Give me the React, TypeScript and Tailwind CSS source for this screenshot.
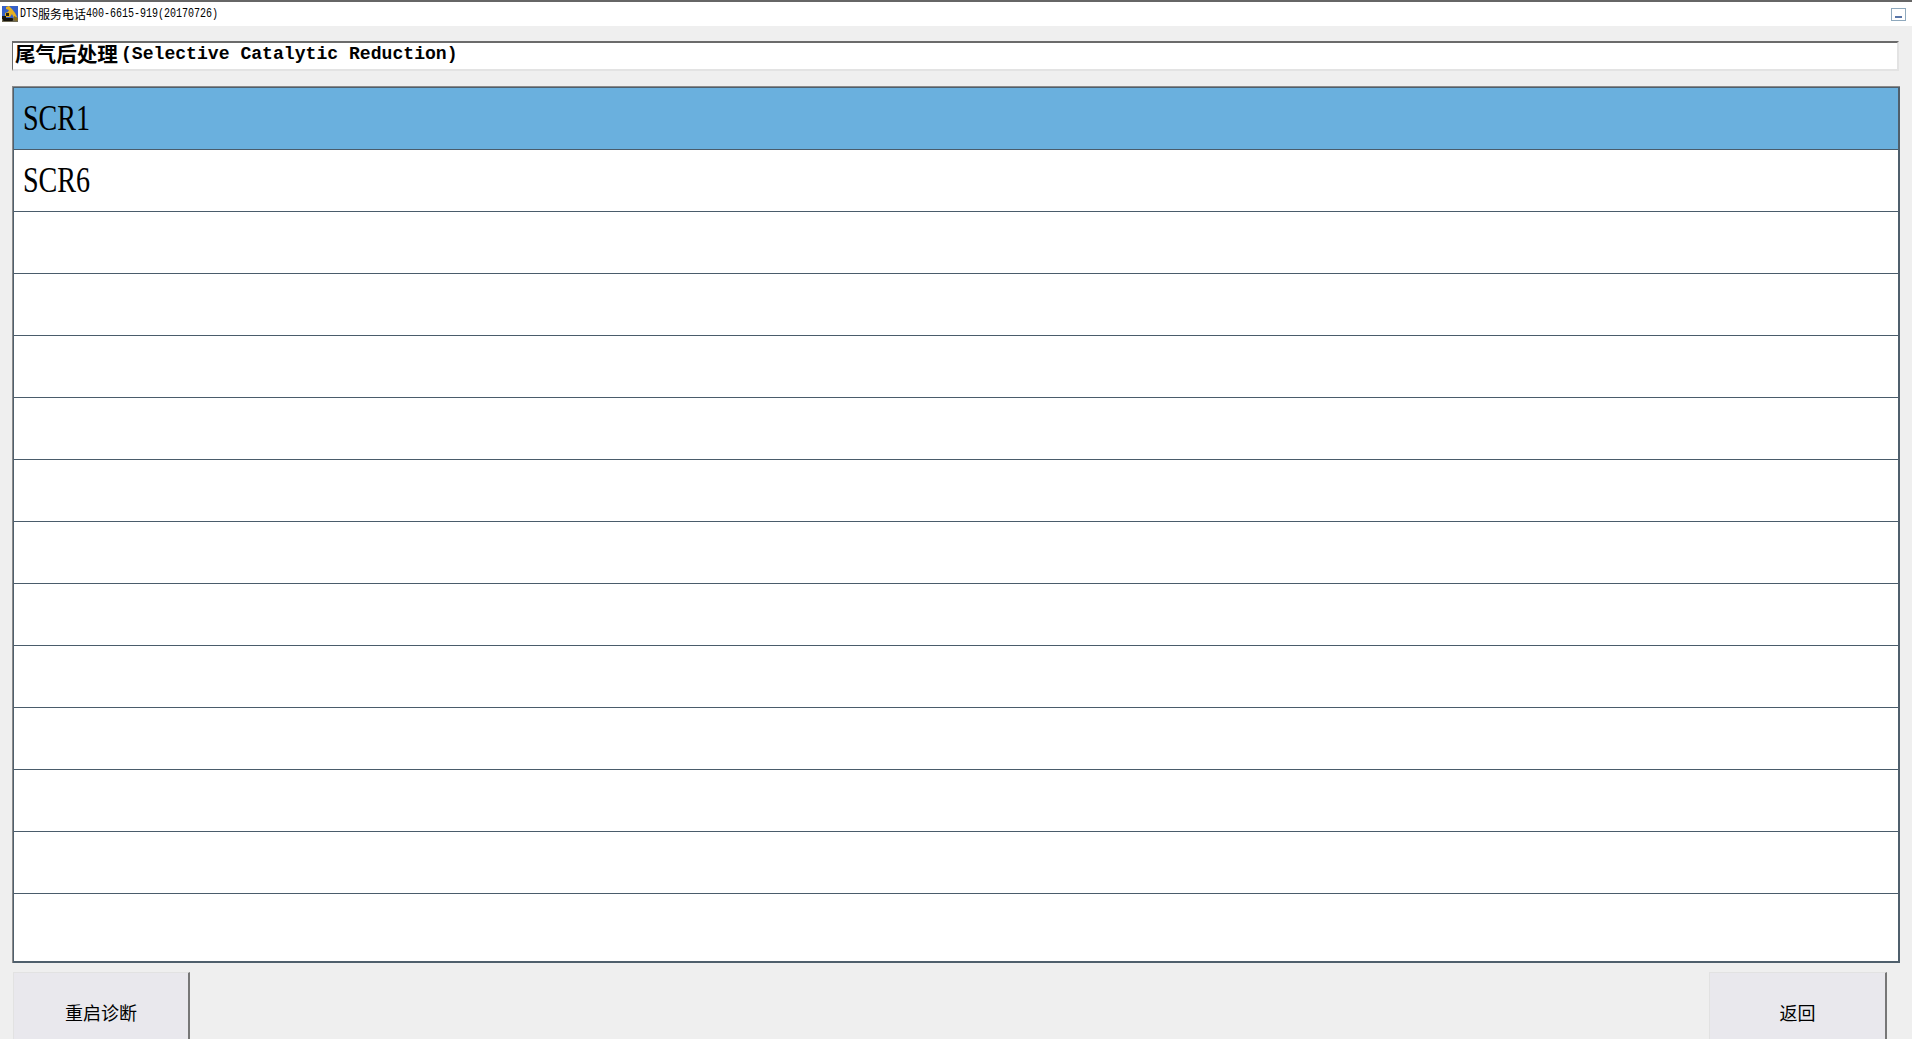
import React from 'react';

const rows = ['SCR1', 'SCR6', '', '', '', '', '', '', '', '', '', '', '', ''];

function LogoIcon() {
    return (
        <svg width="16" height="16" viewBox="0 0 16 16" className="shrink-0">
            <rect width="16" height="16" fill="#3560c8" />
            <rect y="12" width="16" height="4" fill="#6f6a55" />
            <path d="M4 1 L7 0 L10 3 L13 7 L15 11 L12 12 L10 8 L8 11 L3 11 L3 7 L6 6 L7 4 L4 3 Z" fill="#e6b020" />
            <rect x="4" y="7" width="3" height="3" fill="#2b2410" />
            <rect x="0" y="10" width="4" height="3" fill="#1a1a14" />
            <rect x="1" y="12" width="10" height="3" rx="1" fill="#15130c" />
            <path d="M12 10 L16 12 L15 15 L12 14 Z" fill="#8a6d16" />
        </svg>
    );
}

function FooterButton({ label, className }: { label: string; className: string }) {
    return (
        <div
            className={`flex h-[81px] items-start justify-center border-t border-l border-[#e2e2e2] border-r-2 border-r-[#777777] bg-[#e9e8ed] pt-[27px] text-[18px] leading-[24px] text-black ${className}`}
        >
            {label}
        </div>
    );
}

export default function App() {
    return (
        <div
            className="flex h-[1039px] w-[1912px] flex-col overflow-hidden bg-[#efefef] text-black"
            style={{ fontFamily: '"Noto Sans CJK SC", sans-serif' }}
        >
            <div className="flex h-[26px] shrink-0 items-center justify-between border-t-2 border-[#666666] bg-white pr-[6px] pl-[2px]">
                <div className="flex items-center gap-[2px]">
                    <LogoIcon />
                    <span className="flex items-center text-[12px] leading-none whitespace-nowrap">
                        <span className="scale-y-[1.25] font-['Liberation_Mono'] text-[10px]">DTS</span>
                        服务电话
                        <span className="scale-y-[1.25] font-['Liberation_Mono'] text-[10px]">400-6615-919(20170726)</span>
                    </span>
                </div>
                <div className="flex h-[13px] w-[15px] items-end justify-center border border-[#8fa9bd] pb-[2px]">
                    <div className="h-[2px] w-[7px] bg-[#5a76a8]" />
                </div>
            </div>

            <div className="mt-[15px] ml-[12px] flex h-[30px] w-[1887px] shrink-0 items-start border-t-2 border-l border-[#6b6b6b] border-r-2 border-b-2 border-r-[#e3e3e3] border-b-[#e3e3e3] bg-white pl-[2px]">
                <span className="flex items-start leading-[20px] font-bold whitespace-nowrap">
                    <span className="text-[20.6px]">尾气后处理</span>
                    <span className="mt-px ml-[3px] font-['Liberation_Mono'] text-[18.1px]">(Selective Catalytic Reduction)</span>
                </span>
            </div>

            <div className="mt-[15px] ml-[12px] w-[1888px] shrink-0 border-t border-l border-[#8a8a8a]">
                <div className="flex h-[876px] flex-col border border-r-2 border-b-2 border-[#4f5f6c] bg-white">
                    {rows.map((text, i) => (
                        <div
                            key={i}
                            className={`flex min-h-0 flex-1 items-center border-b border-[#4a5c6b] pl-[9px] last:grow-[1.1] last:border-b-0 ${i === 0 ? 'bg-[#6ab0de]' : 'bg-white'}`}
                        >
                            {text && (
                                <span className="mb-[2px] origin-left scale-x-[0.78] font-['Liberation_Serif'] text-[36px] leading-none">
                                    {text}
                                </span>
                            )}
                        </div>
                    ))}
                </div>
            </div>

            <div className="mt-[9px] flex shrink-0 justify-between pr-[25px] pl-[13px]">
                <FooterButton label="重启诊断" className="w-[177px]" />
                <FooterButton label="返回" className="w-[178px]" />
            </div>
        </div>
    );
}
